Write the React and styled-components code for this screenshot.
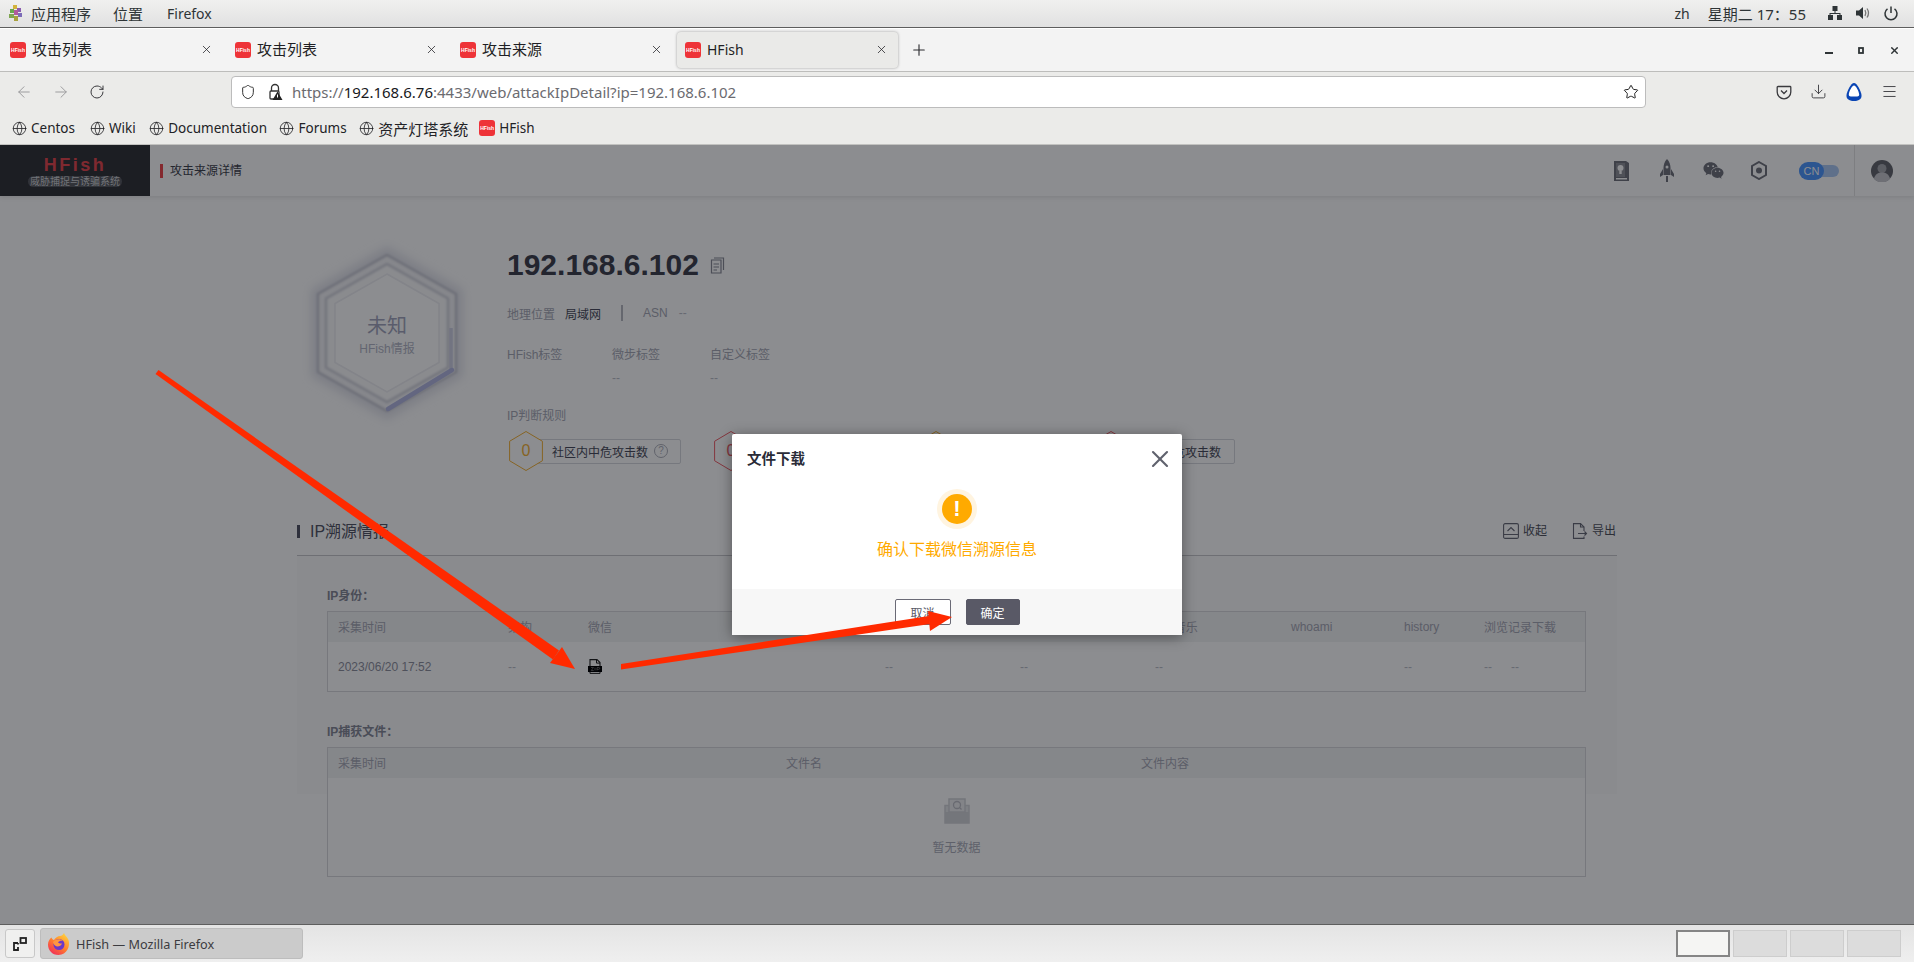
import React from "react";
import styled, { createGlobalStyle } from "styled-components";
import { ArrowLeft, ArrowRight, RotateCw, Shield, Star, Download, Menu, Globe, Plus, X } from "lucide-react";
import { FaWeixin } from "react-icons/fa";

const GlobalStyle = createGlobalStyle`
  html, body { margin: 0; padding: 0; background: #fff; }
  * { box-sizing: border-box; }
`;

const uiFont = `"Noto Sans", "Noto Sans CJK SC", sans-serif`;
const pageFont = `"Liberation Sans", "Noto Sans CJK SC", sans-serif`;

const Screen = styled.div`
  position: relative;
  width: 1914px;
  height: 962px;
  overflow: hidden;
  display: flex;
  flex-direction: column;
  font-family: ${uiFont};
`;

/* ---------- desktop top bar ---------- */
const TopBar = styled.div`
  height: 28px;
  flex: none;
  display: flex;
  align-items: center;
  justify-content: space-between;
  padding: 0 15px 1px 8px;
  background: linear-gradient(#f0f0ef, #e1e1e1);
  border-bottom: 1px solid #5e5e5e;
  font-size: 14px;
  color: #2e3436;
`;
const TopGroup = styled.div`
  display: flex;
  align-items: center;
  gap: ${(p) => p.$gap || 0}px;
  margin-left: ${(p) => p.$left || 0}px;
`;
const TopItem = styled.span`
  margin-left: ${(p) => p.$left || 0}px;
  font-size: ${(p) => (p.$cjk ? 15 : 14)}px;
  white-space: nowrap;
`;

/* ---------- browser chrome ---------- */
const TabBar = styled.div`
  height: 44px;
  flex: none;
  display: flex;
  align-items: center;
  padding-left: 2px;
  background: #f3f3f3;
  border-top: 1px solid #fff;
  border-bottom: 1px solid #bdbdbb;
  color: #1f1f24;
`;
const Tab = styled.div`
  width: 221px;
  height: 36px;
  margin-right: 4px;
  padding: 0 10px 1px 8px;
  display: flex;
  align-items: center;
  gap: 6px;
  border-radius: 4px;
  background: ${(p) => (p.$active ? "#eaeae8" : "transparent")};
  box-shadow: ${(p) => (p.$active ? "0 0 3px rgba(0,0,0,.35)" : "none")};
`;
const TabTitle = styled.span`
  flex: 1;
  padding-bottom: ${(p) => (p.$cjk ? 2 : 0)}px;
  font-size: ${(p) => (p.$cjk ? 15 : 14)}px;
  white-space: nowrap;
`;
const NewTab = styled.div`
  margin-left: 8px;
  display: flex;
  color: #2b2b2f;
`;
const WindowButtons = styled.div`
  margin-left: auto;
  padding-right: 14px;
  display: flex;
  align-items: center;
  gap: 25px;
`;
const Favicon = styled.span`
  width: 16px;
  height: 16px;
  flex: none;
  border-radius: 3px;
  background: #ee3338;
  color: #fff;
  font: bold 5px/16px ${pageFont};
  text-align: center;
  overflow: hidden;
`;
const NavBar = styled.div`
  height: 45px;
  flex: none;
  display: flex;
  align-items: center;
  padding: 0 16px 6px 15px;
  background: #ebebe9;
  color: #3a3a3e;
`;
const NavButtons = styled.div`
  width: 216px;
  display: flex;
  align-items: center;
  gap: 19px;
`;
const UrlBox = styled.div`
  width: 1415px;
  height: 32px;
  display: flex;
  align-items: center;
  padding: 0 6px 0 8px;
  background: #fff;
  border: 1px solid #bcbcbc;
  border-radius: 4px;
`;
const LockSlot = styled.span`
  display: flex;
  margin-left: 11px;
`;
const UrlText = styled.div`
  margin-left: 9px;
  flex: 1;
  font-size: 15px;
  color: #6b6b70;
  white-space: nowrap;
  b {
    font-weight: 400;
    color: #18181c;
  }
`;
const NavTools = styled.div`
  margin-left: auto;
  display: flex;
  align-items: center;
  gap: 18px;
`;
const Bookmarks = styled.div`
  height: 28px;
  flex: none;
  display: flex;
  align-items: flex-start;
  padding-left: 12px;
  background: #ebebe9;
  border-bottom: 1px solid #c2c2c0;
  color: #222226;
`;
const Bookmark = styled.div`
  display: flex;
  align-items: center;
  gap: 4px;
  height: 22px;
  margin-right: ${(p) => p.$gap || 0}px;
  font-size: ${(p) => (p.$cjk ? 15 : 13.5)}px;
  white-space: nowrap;
  color: #222226;
`;

/* ---------- HFish page ---------- */
const Page = styled.div`
  position: relative;
  flex: 1;
  min-height: 0;
  background: #fff;
  font-family: ${pageFont};
  color: #90929f;
  overflow: hidden;
`;
const Header = styled.div`
  height: 51px;
  display: flex;
  align-items: center;
  box-shadow: 0 1px 5px rgba(0, 0, 0, 0.12);
`;
const Logo = styled.div`
  width: 150px;
  height: 51px;
  flex: none;
  display: flex;
  flex-direction: column;
  align-items: center;
  padding-top: 11px;
  background: #33353a;
`;
const LogoName = styled.div`
  font-size: 18px;
  line-height: 18px;
  font-weight: bold;
  letter-spacing: 2.500px;
  color: #e84a50;
`;
const LogoTag = styled.div`
  margin-top: 2px;
  width: 94px;
  font-size: 10px;
  line-height: 11px;
  color: #cfd0d4;
  background: #5a5c61;
  border-radius: 6px;
  text-align: center;
  white-space: nowrap;
`;
const Crumb = styled.div`
  margin-left: 10px;
  padding-left: 7px;
  font-size: 12px;
  line-height: 14px;
  color: #434550;
  border-left: 3px solid #f0494f;
`;
const HeadTools = styled.div`
  margin-left: auto;
  height: 51px;
  display: flex;
  align-items: center;
  color: #73757f;
`;
const HeadIcon = styled.span`
  width: 46px;
  display: flex;
  justify-content: center;
`;
const Toggle = styled.div`
  position: relative;
  width: 40px;
  height: 12px;
  margin: 0 15px 0 17px;
  border-radius: 6px;
  background: #aecbf5;
`;
const ToggleKnob = styled.span`
  position: absolute;
  left: 0;
  top: -3px;
  width: 25px;
  height: 18px;
  border-radius: 9px;
  background: #5099ff;
  color: #fff;
  font-size: 11px;
  line-height: 18px;
  text-align: center;
`;
const Avatar = styled.div`
  width: 60px;
  height: 51px;
  padding-right: 6px;
  display: flex;
  align-items: center;
  justify-content: center;
  border-left: 1px solid #e4e4e4;
`;
const Hero = styled.div`
  display: flex;
  margin-left: 297px;
  padding-top: 42px;
`;
const Badge = styled.div`
  position: relative;
  width: 180px;
  height: 190px;
  flex: none;
`;
const BadgeArt = styled.svg`
  position: absolute;
  inset: 0;
`;
const BadgeText = styled.div`
  position: absolute;
  inset: 0;
  display: flex;
  flex-direction: column;
  align-items: center;
  padding-top: 76px;
  color: #a4a7bd;
`;
const BadgeTitle = styled.div`
  font-size: 20px;
  line-height: 24px;
`;
const BadgeSub = styled.div`
  margin-top: 3px;
  font-size: 12px;
  line-height: 16px;
  color: #b4b7c6;
`;
const Info = styled.div`
  margin-left: 30px;
  padding-top: 9px;
`;
const IpLine = styled.div`
  height: 36px;
  display: flex;
  align-items: center;
  gap: 11px;
  font-size: 30px;
  font-weight: bold;
  color: #41434f;
`;
const MetaRow = styled.div`
  margin-top: 20px;
  height: 20px;
  display: flex;
  align-items: center;
  font-size: 12px;
  color: #a8aab6;
`;
const MetaValue = styled.span`
  margin-left: 10px;
  color: #4c4e5d;
`;
const MetaDivider = styled.span`
  width: 2px;
  height: 16px;
  margin: 0 20px;
  background: #b8bac2;
`;
const Tags = styled.div`
  margin-top: 22px;
  display: grid;
  grid-template-columns: 105px 98px auto;
  font-size: 12px;
  line-height: 20px;
  color: #a8aab6;
`;
const TagValue = styled.div`
  margin-top: 5px;
  line-height: 16px;
  color: #bcbec8;
`;
const RuleTitle = styled.div`
  margin-top: 21px;
  font-size: 12px;
  line-height: 18px;
  color: #a8aab6;
`;
const Rules = styled.div`
  margin: 6px 0 0 2px;
  display: flex;
  gap: 33px;
`;
const Rule = styled.div`
  width: ${(p) => p.$w}px;
  height: 40px;
  display: flex;
  align-items: center;
`;
const RuleHex = styled.div`
  position: relative;
  z-index: 1;
  width: 34px;
  height: 40px;
  flex: none;
  display: flex;
  align-items: center;
  justify-content: center;
  font-size: 16px;
  color: ${(p) => p.$c};
  svg {
    position: absolute;
    inset: 0;
  }
  span {
    position: relative;
  }
`;
const RuleBox = styled.div`
  flex: 1;
  height: 25px;
  margin-left: -17px;
  padding-left: 25px;
  display: flex;
  align-items: center;
  gap: 6px;
  border: 1px solid #d8d9de;
  border-radius: 2px;
  font-size: 12px;
  color: #4c4e5d;
  white-space: nowrap;
`;
const Help = styled.span`
  width: 14px;
  height: 14px;
  border: 1px solid #b0b2bc;
  border-radius: 50%;
  font-size: 10px;
  line-height: 12px;
  text-align: center;
  color: #b0b2bc;
`;
const Section = styled.div`
  margin: 40px 297px 0;
`;
const SectionHead = styled.div`
  display: flex;
  align-items: center;
  padding: 10px 1px 14px 0;
  border-bottom: 1px solid #c8c8cc;
`;
const SectionTitle = styled.div`
  padding-left: 10px;
  border-left: 3px solid #555766;
  font-size: 16px;
  line-height: 13px;
  color: #555766;
`;
const SectionAction = styled.div`
  display: flex;
  align-items: center;
  gap: 4px;
  margin-left: ${(p) => (p.$auto ? "auto" : `${p.$left || 0}px`)};
  font-size: 12px;
  line-height: 20px;
  color: #52545e;
`;
const Panel = styled.div`
  height: 238px;
  padding: 31px 31px 0 30px;
  background: #fbfbfb;
`;
const SubTitle = styled.div`
  font-size: 12px;
  line-height: 18px;
  font-weight: bold;
  color: #888a98;
  margin-top: ${(p) => p.$top || 0}px;
`;
const Table = styled.div`
  margin-top: 6px;
  background: #fff;
  border: 1px solid #d9d9dd;
`;
const Row = styled.div`
  display: grid;
  grid-template-columns: ${(p) => p.$cols};
  align-items: center;
  height: ${(p) => p.$h}px;
  padding-left: 10px;
  padding-bottom: ${(p) => (p.$head ? 1 : 0)}px;
  font-size: 12px;
  background: ${(p) => (p.$head ? "#f3f4f4" : "#ffffff")};
  color: ${(p) => (p.$head ? "#a7a9b6" : "#90929f")};
`;
const Dash = styled.span`
  color: #bcbec8;
  margin-left: ${(p) => p.$left || 0}px;
`;
const DashPair = styled.span`
  display: flex;
  gap: 19px;
`;
const ZipCell = styled.span`
  display: flex;
`;
const Empty = styled.div`
  height: 98px;
  display: flex;
  flex-direction: column;
  align-items: center;
  padding-top: 20px;
  font-size: 12px;
  color: #adafbb;
`;
const EmptyText = styled.div`
  margin-top: 16px;
  line-height: 16px;
`;

/* ---------- modal ---------- */
const Overlay = styled.div`
  position: absolute;
  inset: 0;
  z-index: 2;
  display: flex;
  justify-content: center;
  align-items: flex-start;
  padding-top: 289px;
  background: rgba(0, 3, 8, 0.45);
`;
const Dialog = styled.div`
  width: 450px;
  height: 201px;
  display: flex;
  flex-direction: column;
  background: #fff;
  border-radius: 2px;
  box-shadow: 0 2px 14px rgba(0, 0, 0, 0.4);
`;
const DialogHead = styled.div`
  height: 50px;
  flex: none;
  display: flex;
  align-items: center;
  justify-content: space-between;
  padding: 0 8px 0 15px;
`;
const DialogTitle = styled.span`
  padding-bottom: 4px;
  font-size: 14.500px;
  font-weight: bold;
  color: #2a2c38;
`;
const DialogBody = styled.div`
  flex: 1;
  display: flex;
  flex-direction: column;
  align-items: center;
  padding-top: 5px;
`;
const WarnRing = styled.div`
  width: 40px;
  height: 40px;
  display: flex;
  align-items: center;
  justify-content: center;
  border-radius: 50%;
  background: #fff4e0;
`;
const WarnDot = styled.div`
  width: 30px;
  height: 30px;
  border-radius: 50%;
  background: #ffaa00;
  color: #fff;
  font: bold 22px/30px ${pageFont};
  text-align: center;
`;
const DialogText = styled.div`
  margin-top: 10px;
  font-size: 16px;
  line-height: 22px;
  color: #ffaa00;
`;
const DialogFoot = styled.div`
  height: 46px;
  flex: none;
  display: flex;
  align-items: center;
  justify-content: center;
  gap: 15px;
  background: #f7f7f7;
`;
const DialogButton = styled.button`
  width: ${(p) => (p.$primary ? 54 : 56)}px;
  height: 26px;
  padding: 0;
  font-family: ${pageFont};
  font-size: 12px;
  border-radius: 2px;
  border: 1px solid ${(p) => (p.$primary ? "#595966" : "#6a6a76")};
  background: ${(p) => (p.$primary ? "#595966" : "#fff")};
  color: ${(p) => (p.$primary ? "#fff" : "#595966")};
`;

/* ---------- desktop task bar ---------- */
const TaskBar = styled.div`
  height: 38px;
  flex: none;
  display: flex;
  align-items: center;
  padding: 0 13px 0 5px;
  background: linear-gradient(#e4e4e4, #efefef);
  border-top: 1px solid #5e5e5e;
`;
const DesktopButton = styled.div`
  width: 30px;
  height: 29px;
  display: flex;
  align-items: center;
  justify-content: center;
  background: #f0f0ef;
  border: 1px solid #c8c8c8;
  border-radius: 3px;
`;
const WindowButton = styled.div`
  width: 263px;
  height: 31px;
  margin-left: 5px;
  padding-left: 6px;
  display: flex;
  align-items: center;
  gap: 5px;
  background: #cbcbcb;
  border: 1px solid #bdbdbd;
  border-radius: 3px;
  font-size: 12.700px;
  color: #3c3c40;
`;
const Workspaces = styled.div`
  margin-left: auto;
  display: flex;
  gap: 3px;
`;
const Workspace = styled.div`
  width: 54px;
  height: 27px;
  background: ${(p) => (p.$active ? "#f5f5f3" : "#dcdcdc")};
  border: ${(p) => (p.$active ? "2px solid #858585" : "1px solid #cdcdcd")};
`;

const Annotations = styled.svg`
  position: absolute;
  z-index: 3;
  left: 0;
  top: 0;
  pointer-events: none;
`;

/* ---------- drawings ---------- */
const GnomeFoot = () => (
  <svg width="15" height="18" viewBox="0 0 15 18">
    <rect x="5" y="1" width="4" height="4" fill="#d3b43c" />
    <rect x="9" y="4" width="4" height="4" fill="#8a5cb0" />
    <rect x="2" y="5" width="4" height="4" fill="#6aa84f" />
    <rect x="6" y="6" width="4" height="5" fill="#b05a9e" />
    <rect x="10" y="9" width="4" height="4" fill="#7c6bb8" />
    <rect x="1" y="10" width="5" height="4" fill="#7fa650" />
    <rect x="6" y="12" width="4" height="5" fill="#a8a13e" />
  </svg>
);
const NetIcon = () => (
  <svg width="16" height="16" viewBox="0 0 16 16" fill="#2e3436">
    <rect x="5.500" y="1" width="5" height="5" />
    <rect x="1" y="10" width="5" height="5" />
    <rect x="10" y="10" width="5" height="5" />
    <path d="M7.500 6h1v2h5v2h-1V9H3.500v1h-1V8h5z" />
  </svg>
);
const VolumeIcon = () => (
  <svg width="16" height="16" viewBox="0 0 16 16">
    <path d="M1 5.500h3L8 2v12L4 10.500H1z" fill="#2e3436" />
    <path d="M10 5c1 1.800 1 4.200 0 6M12 3.500c1.800 2.700 1.800 6.300 0 9" stroke="#777" strokeWidth="1.300" fill="none" />
  </svg>
);
const PowerIcon = () => (
  <svg width="16" height="16" viewBox="0 0 16 16" fill="none" stroke="#2e3436" strokeWidth="1.500">
    <path d="M8 1.500v6.500" />
    <path d="M4.500 3.800a6 6 0 1 0 7 0" />
  </svg>
);
const LockWarn = () => (
  <svg width="16" height="18" viewBox="0 0 16 18" fill="none">
    <path d="M4.500 8V5a3.500 3.500 0 0 1 7 0v3" stroke="#333" strokeWidth="1.300" />
    <rect x="3" y="8" width="9" height="8" rx="1" stroke="#333" strokeWidth="1.300" fill="#fff" />
    <path d="M10.500 8.500l5 8.500h-10z" fill="#222" />
    <rect x="10" y="11.500" width="1" height="3" fill="#fff" />
  </svg>
);
const PocketIcon = () => (
  <svg width="16" height="16" viewBox="0 0 16 16" fill="none" stroke="#3a3a3e" strokeWidth="1.300">
    <path d="M2 2.500h12a.8.8 0 0 1 .8.8V8a6.800 6.800 0 0 1-13.600 0V3.300a.8.8 0 0 1 .8-.8z" />
    <path d="M5 6.500l3 3 3-3" />
  </svg>
);
const AccountIcon = () => (
  <svg width="18" height="20" viewBox="0 0 18 20">
    <path d="M9 1C12 1 16 9 16.500 13c.4 3.500-2 6-7.500 6s-7.900-2.500-7.500-6C2 9 6 1 9 1z" fill="#0a45b4" />
    <path d="M9 3.500c2 0 5 6 5.200 9 .1 1.300-.8 2-2 2H5.800c-1.200 0-2.100-.7-2-2C4 9.500 7 3.500 9 3.500z" fill="#fff" />
  </svg>
);
const BookIcon = () => (
  <svg width="19" height="22" viewBox="0 0 19 22" fill="currentColor">
    <path d="M2 1h12l3 2v18H2z" />
    <path d="M4 3h9v14H4z" fill="#c8c8cc" opacity=".35" />
    <circle cx="8.500" cy="8" r="3" fill="#fff" />
    <rect x="7.300" y="11" width="2.400" height="3" fill="#fff" />
    <rect x="4" y="18" width="11" height="1.500" fill="#fff" />
  </svg>
);
const RocketIcon = () => (
  <svg width="16" height="24" viewBox="0 0 16 24" fill="currentColor">
    <path d="M8 0c2.500 2.500 3.500 6 3.500 9v7h-7V9C4.500 6 5.500 2.500 8 0z" />
    <path d="M4 10L1 15v3l3-2zM12 10l3 5v3l-3-2z" />
    <path d="M7 17h2v6H7z" />
    <circle cx="8" cy="8" r="1.500" fill="#fff" />
  </svg>
);
const HexNutIcon = () => (
  <svg width="16" height="19" viewBox="0 0 16 19" fill="none">
    <path d="M8 1l7 4v9l-7 4-7-4V5z" stroke="currentColor" strokeWidth="2" />
    <circle cx="8" cy="9.500" r="3" fill="currentColor" />
  </svg>
);
const AvatarIcon = () => (
  <svg width="22" height="22" viewBox="0 0 22 22">
    <circle cx="11" cy="11" r="11" fill="#66686f" />
    <circle cx="11" cy="8.500" r="4.500" fill="#a8a9b0" />
    <path d="M3 19c1-5 4-6.500 8-6.500s7 1.500 8 6.500a11 11 0 0 1-16 0z" fill="#c8c9ce" />
  </svg>
);
const CopyIcon = () => (
  <svg width="15" height="17" viewBox="0 0 15 17" fill="none" stroke="#8a8c98" strokeWidth="1.200">
    <path d="M4 1h9.500v12" />
    <path d="M1.500 3h9.500v13H1.500z" />
    <path d="M3.500 7h5.500M3.500 10h5.500M3.500 13h3.500" />
  </svg>
);
const CollapseIcon = () => (
  <svg width="16" height="16" viewBox="0 0 16 16" fill="none" stroke="#6a6c78" strokeWidth="1.100">
    <rect x=".6" y=".6" width="14.800" height="14.800" rx="1.500" />
    <path d="M.6 11.500h14.800M4.500 8L8 4.500 11.500 8" />
  </svg>
);
const ExportIcon = () => (
  <svg width="16" height="16" viewBox="0 0 16 16" fill="none" stroke="#6a6c78" strokeWidth="1.100">
    <path d="M12 8V4L8.500.6H1.500v14.800H12v-2" />
    <path d="M8.500.6V4H12M6 10.500h8.500M12.500 8.500l2 2-2 2" />
  </svg>
);
const ZipIcon = () => (
  <svg width="14" height="15" viewBox="0 0 14 15">
    <path d="M2 7V.6h7l3 3v4" fill="#fff" stroke="#222" strokeWidth="1.100" />
    <path d="M8.500.6v3.500H12" fill="none" stroke="#222" strokeWidth="1" />
    <rect x="0" y="7" width="14" height="6" fill="#000" />
    <path d="M2 13v1.400h10V13" fill="none" stroke="#222" strokeWidth="1" />
    <path d="M3 8.500h2.500L3.200 11.500h2.500M7 8.500v3M9 11.500v-3h1.800a.8.8 0 0 1 0 1.800H9" fill="none" stroke="#888" strokeWidth=".7" />
  </svg>
);
const EmptyIcon = () => (
  <svg width="26" height="26" viewBox="0 0 26 26" fill="none">
    <path d="M1 7.500h24V25H1z" fill="#e6e7ea" stroke="#d4d5d9" strokeWidth="1.500" />
    <path d="M1 14h24v11H1z" fill="#d4d5d9" />
    <path d="M5 1h16v13H5z" fill="#eeeef1" stroke="#d2d3d8" strokeWidth="1.500" />
    <circle cx="13" cy="7" r="3.500" stroke="#bfc0c6" strokeWidth="1.300" />
    <path d="M15.500 9.500l2 2" stroke="#bfc0c6" strokeWidth="1.300" />
  </svg>
);
const FirefoxIcon = () => (
  <svg width="24" height="24" viewBox="0 0 24 24">
    <defs>
      <linearGradient id="ffBody" x1="0.800" y1="0.100" x2="0.200" y2="1">
        <stop offset="0" stopColor="#ffc93a" />
        <stop offset="0.500" stopColor="#ff7a2e" />
        <stop offset="1" stopColor="#f02a5c" />
      </linearGradient>
    </defs>
    <path d="M17 1c.5 2.500 3.500 4 4.500 7 2 6-1.500 15-10 15C5 23 1 18 1 12.500 1 9.500 2.500 7 4.500 5.500 5 7 6 8 7 8c1-2 4-4 6-4 1.500 0 3-1 4-3z" fill="url(#ffBody)" />
    <circle cx="12" cy="12.500" r="5.500" fill="#6b38c9" />
    <path d="M6 10c2-3 7-4 10-1-2-.5-4 0-5 1.500 1 1 2.500 1 4 1-1 3-5 4-7 2-1-.8-1.800-2-2-3.500z" fill="#ff9640" />
  </svg>
);
const DesktopIcon = () => (
  <svg width="14" height="14" viewBox="0 0 14 14" fill="none" stroke="#222" strokeWidth="1.800">
    <rect x="7.500" y="1" width="5.500" height="5" />
    <path d="M5 6H1v7h1.800M5 6v1.500M1 13h4v-3" />
  </svg>
);

const hexPoints = (cx, cy, rx, ry) =>
  [
    [cx, cy - ry],
    [cx + rx, cy - ry / 2],
    [cx + rx, cy + ry / 2],
    [cx, cy + ry],
    [cx - rx, cy + ry / 2],
    [cx - rx, cy - ry / 2],
  ]
    .map((p) => p.join(","))
    .join(" ");

const BadgeHex = () => (
  <BadgeArt width="180" height="190" viewBox="0 0 180 190">
    <defs>
      <filter id="hexGlow" x="-20%" y="-20%" width="140%" height="140%">
        <feGaussianBlur stdDeviation="5" />
      </filter>
      <filter id="ringSoft" x="-10%" y="-10%" width="120%" height="120%">
        <feGaussianBlur stdDeviation="0.800" />
      </filter>
    </defs>
    <polygon points={hexPoints(90, 95, 76, 87)} fill="#e4e5ec" filter="url(#hexGlow)" />
    <polygon points={hexPoints(90, 95, 69, 78)} fill="#f4f4f7" stroke="#c6c7d2" strokeWidth="2.500" strokeLinejoin="round" filter="url(#ringSoft)" />
    <polygon points={hexPoints(90, 95, 61, 69)} fill="#fbfbfc" stroke="#d0d1da" strokeWidth="2.500" strokeLinejoin="round" filter="url(#ringSoft)" />
    <polygon points={hexPoints(90, 95, 52, 59)} fill="#ffffff" stroke="#eeeef2" strokeWidth="1.500" />
    <path d="M154 90v42" stroke="#cfd1e4" strokeWidth="3.500" fill="none" />
    <path d="M155 132L91 171" stroke="#b4b9e2" strokeWidth="4.500" strokeLinecap="round" fill="none" />
  </BadgeArt>
);
const SmallHex = ({ c }) => (
  <svg width="34" height="40" viewBox="0 0 34 40">
    <polygon points={hexPoints(17, 20, 16.400, 19.500)} fill="#fff" stroke={c} strokeWidth="1" />
  </svg>
);

const cols1 = "170px 80px 297px 135px 135px 136px 113px 80px 1fr";
const cols2 = "448px 355px 1fr";

const tabs = [
  { title: "攻击列表", cjk: true },
  { title: "攻击列表", cjk: true },
  { title: "攻击来源", cjk: true },
  { title: "HFish", active: true },
];
const marks = [
  { name: "Centos", gap: 15 },
  { name: "Wiki", gap: 13.5 },
  { name: "Documentation", gap: 12.5 },
  { name: "Forums", gap: 12.5 },
  { name: "资产灯塔系统", gap: 11, cjk: true },
];
const rules = [
  { w: 172, c: "#f5b43a", text: "社区内中危攻击数", help: true },
  { w: 172, c: "#f0606a", text: "社区内高危攻击数" },
  { w: 142, c: "#f5b43a", text: "本地中危攻击数" },
  { w: 141, c: "#f0606a", text: "本地高危攻击数" },
];

export default function App() {
  return (
    <Screen>
      <GlobalStyle />
      <TopBar>
        <TopGroup>
          <GnomeFoot />
          <TopItem $cjk $left={8}>应用程序</TopItem>
          <TopItem $cjk $left={22}>位置</TopItem>
          <TopItem $left={24}>Firefox</TopItem>
        </TopGroup>
        <TopGroup>
          <TopItem>zh</TopItem>
          <TopItem $cjk $left={18}>星期二 17：55</TopItem>
          <TopGroup $gap={12} $left={21}>
            <NetIcon />
            <VolumeIcon />
            <PowerIcon />
          </TopGroup>
        </TopGroup>
      </TopBar>

      <TabBar>
        {tabs.map((t, i) => (
          <Tab key={i} $active={t.active}>
            <Favicon>HFish</Favicon>
            <TabTitle $cjk={t.cjk}>{t.title}</TabTitle>
            <X size={13} strokeWidth={1.4} />
          </Tab>
        ))}
        <NewTab>
          <Plus size={18} strokeWidth={1.5} />
        </NewTab>
        <WindowButtons>
          <svg width="8" height="8" viewBox="0 0 8 8"><rect y="6" width="8" height="2" fill="#2e3436" /></svg>
          <svg width="6" height="7" viewBox="0 0 6 7"><rect x="1" y="1" width="4" height="5" fill="none" stroke="#2e3436" strokeWidth="1.800" /></svg>
          <X size={11} strokeWidth={3} color="#2e3436" />
        </WindowButtons>
      </TabBar>

      <NavBar>
        <NavButtons>
          <ArrowLeft size={18} strokeWidth={1.3} color="#9a9a9c" />
          <ArrowRight size={18} strokeWidth={1.3} color="#9a9a9c" />
          <RotateCw size={16} strokeWidth={1.5} color="#3a3a3e" />
        </NavButtons>
        <UrlBox>
          <Shield size={16} strokeWidth={1.5} color="#333" />
          <LockSlot><LockWarn /></LockSlot>
          <UrlText>
            https://<b>192.168.6.76</b>:4433/web/attackIpDetail?ip=192.168.6.102
          </UrlText>
          <Star size={16} strokeWidth={1.5} color="#222" />
        </UrlBox>
        <NavTools>
          <PocketIcon />
          <Download size={17} strokeWidth={1.3} />
          <AccountIcon />
          <Menu size={17} strokeWidth={1.3} />
        </NavTools>
      </NavBar>

      <Bookmarks>
        {marks.map((m) => (
          <Bookmark key={m.name} $cjk={m.cjk} $gap={m.gap}>
            <Globe size={15} strokeWidth={1.3} />
            {m.name}
          </Bookmark>
        ))}
        <Bookmark>
          <Favicon>HFish</Favicon>
          HFish
        </Bookmark>
      </Bookmarks>

      <Page>
        <Header>
          <Logo>
            <LogoName>HFish</LogoName>
            <LogoTag>威胁捕捉与诱骗系统</LogoTag>
          </Logo>
          <Crumb>攻击来源详情</Crumb>
          <HeadTools>
            <HeadIcon><BookIcon /></HeadIcon>
            <HeadIcon><RocketIcon /></HeadIcon>
            <HeadIcon><FaWeixin size={21} /></HeadIcon>
            <HeadIcon><HexNutIcon /></HeadIcon>
            <Toggle>
              <ToggleKnob>CN</ToggleKnob>
            </Toggle>
            <Avatar><AvatarIcon /></Avatar>
          </HeadTools>
        </Header>

        <Hero>
          <Badge>
            <BadgeHex />
            <BadgeText>
              <BadgeTitle>未知</BadgeTitle>
              <BadgeSub>HFish情报</BadgeSub>
            </BadgeText>
          </Badge>
          <Info>
            <IpLine>
              192.168.6.102
              <CopyIcon />
            </IpLine>
            <MetaRow>
              地理位置
              <MetaValue>局域网</MetaValue>
              <MetaDivider />
              ASN
              <Dash $left={11}>--</Dash>
            </MetaRow>
            <Tags>
              <div>HFish标签</div>
              <div>微步标签</div>
              <div>自定义标签</div>
              <TagValue />
              <TagValue>--</TagValue>
              <TagValue>--</TagValue>
            </Tags>
            <RuleTitle>IP判断规则</RuleTitle>
            <Rules>
              {rules.map((r) => (
                <Rule key={r.text} $w={r.w}>
                  <RuleHex $c={r.c}>
                    <SmallHex c={r.c} />
                    <span>0</span>
                  </RuleHex>
                  <RuleBox>
                    {r.text}
                    {r.help && <Help>?</Help>}
                  </RuleBox>
                </Rule>
              ))}
            </Rules>
          </Info>
        </Hero>

        <Section>
          <SectionHead>
            <SectionTitle>IP溯源情报</SectionTitle>
            <SectionAction $auto>
              <CollapseIcon />
              收起
            </SectionAction>
            <SectionAction $left={25}>
              <ExportIcon />
              导出
            </SectionAction>
          </SectionHead>
          <Panel>
            <SubTitle>IP身份：</SubTitle>
            <Table>
              <Row $head $h={30} $cols={cols1}>
                <span>采集时间</span>
                <span>架构</span>
                <span>微信</span>
                <span>QQ</span>
                <span>百度</span>
                <span>QQ音乐</span>
                <span>whoami</span>
                <span>history</span>
                <span>浏览记录下载</span>
              </Row>
              <Row $h={49} $cols={cols1}>
                <span>2023/06/20 17:52</span>
                <Dash>--</Dash>
                <ZipCell><ZipIcon /></ZipCell>
                <Dash>--</Dash>
                <Dash>--</Dash>
                <Dash>--</Dash>
                <span />
                <Dash>--</Dash>
                <DashPair>
                  <Dash>--</Dash>
                  <Dash>--</Dash>
                </DashPair>
              </Row>
            </Table>
            <SubTitle $top={31}>IP捕获文件：</SubTitle>
            <Table>
              <Row $head $h={30} $cols={cols2}>
                <span>采集时间</span>
                <span>文件名</span>
                <span>文件内容</span>
              </Row>
              <Empty>
                <EmptyIcon />
                <EmptyText>暂无数据</EmptyText>
              </Empty>
            </Table>
          </Panel>
        </Section>

        <Overlay>
          <Dialog>
            <DialogHead>
              <DialogTitle>文件下载</DialogTitle>
              <X size={28} strokeWidth={1.8} color="#5f616d" />
            </DialogHead>
            <DialogBody>
              <WarnRing>
                <WarnDot>!</WarnDot>
              </WarnRing>
              <DialogText>确认下载微信溯源信息</DialogText>
            </DialogBody>
            <DialogFoot>
              <DialogButton>取消</DialogButton>
              <DialogButton $primary>确定</DialogButton>
            </DialogFoot>
          </Dialog>
        </Overlay>
      </Page>

      <TaskBar>
        <DesktopButton>
          <DesktopIcon />
        </DesktopButton>
        <WindowButton>
          <FirefoxIcon />
          HFish — Mozilla Firefox
        </WindowButton>
        <Workspaces>
          <Workspace $active />
          <Workspace />
          <Workspace />
          <Workspace />
        </Workspaces>
      </TaskBar>

      <Annotations width="1914" height="962" viewBox="0 0 1914 962">
        <g fill="#ff2a00">
          <polygon points="158.500,370 155.500,374 553,659.500 559,650.500" />
          <polygon points="562,647 550,663 575,669" />
          <polygon points="621,664 621,669.500 930,624 929,616" />
          <polygon points="928,611 930,631 952,617" />
        </g>
      </Annotations>
    </Screen>
  );
}
